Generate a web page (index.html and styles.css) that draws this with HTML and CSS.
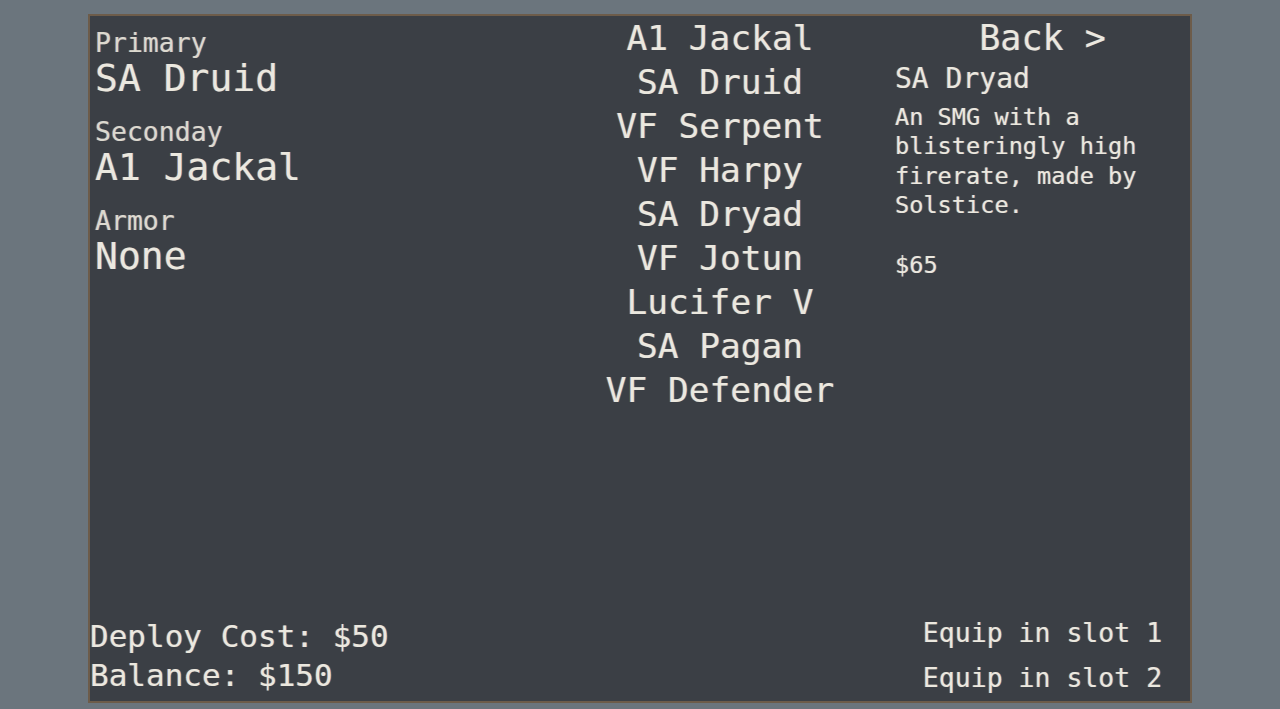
FILE: index.html
```html
<!DOCTYPE html>
<html lang="en">
<head>
<meta charset="utf-8">
<title>Loadout</title>
<link rel="stylesheet" href="styles.css">
</head>
<body>
<main class="panel">
  <section class="col col-loadout">
    <div class="loadout">
      <div class="slot">
        <div class="slot-label">Primary</div>
        <div class="slot-value">SA Druid</div>
      </div>
      <div class="slot">
        <div class="slot-label">Seconday</div>
        <div class="slot-value">A1 Jackal</div>
      </div>
      <div class="slot">
        <div class="slot-label">Armor</div>
        <div class="slot-value">None</div>
      </div>
    </div>
    <div class="funds">
      <div>Deploy Cost: $50</div>
      <div>Balance: $150</div>
    </div>
  </section>

  <section class="col col-list">
    <ul class="weapons">
      <li>A1 Jackal</li>
      <li>SA Druid</li>
      <li>VF Serpent</li>
      <li>VF Harpy</li>
      <li>SA Dryad</li>
      <li>VF Jotun</li>
      <li>Lucifer V</li>
      <li>SA Pagan</li>
      <li>VF Defender</li>
    </ul>
  </section>

  <section class="col col-detail">
    <div class="detail">
      <div class="back">Back &gt;</div>
      <div class="detail-name">SA Dryad</div>
      <p class="detail-desc">An SMG with a blisteringly high firerate, made by Solstice.</p>
      <p class="detail-price">$65</p>
    </div>
    <div class="equip">
      <div class="equip-btn">Equip in slot 1</div>
      <div class="equip-btn">Equip in slot 2</div>
    </div>
  </section>
</main>
</body>
</html>
```
FILE: styles.css
```css
html, body {
  margin: 0;
  padding: 0;
}

body {
  width: 1280px;
  height: 709px;
  background: #6b757d;
  font-family: "DejaVu Sans Mono", "Liberation Mono", monospace;
  color: #ebe8df;
  overflow: hidden;
}

.panel {
  box-sizing: border-box;
  margin: 14px 0 0 88px;
  width: 1104px;
  height: 689px;
  border: 2px solid #6d5c4a;
  background: #3b3f45;
  display: grid;
  grid-template-columns: 490px 280px 1fr;
  text-shadow: -1px 0 rgba(230, 150, 60, 0.35), 1px 0 rgba(80, 150, 255, 0.35);
}

.col {
  display: flex;
  flex-direction: column;
  justify-content: space-between;
  min-height: 0;
}

/* left: current loadout + money */
.loadout {
  padding: 12px 0 0 5px;
}

.slot {
  margin-bottom: 19px;
}

.slot-label {
  font-size: 26.5px;
  line-height: 30px;
  color: #dcd9cf;
}

.slot-value {
  font-size: 38px;
  line-height: 40px;
}

.funds {
  font-size: 31px;
  line-height: 39px;
  padding-bottom: 6px;
}

/* middle: weapon list */
.weapons {
  list-style: none;
  margin: 0;
  padding: 0;
  text-align: center;
  font-size: 34.5px;
  line-height: 44px;
}

/* right: weapon details + equip buttons */
.col-detail {
  padding: 0 0 0 35px;
}

.back {
  text-align: center;
  font-size: 35px;
  line-height: 44px;
}

.detail-name {
  font-size: 28px;
  line-height: 36px;
  margin-top: 1px;
}

.detail-desc,
.detail-price {
  margin: 0;
  font-size: 23.6px;
  line-height: 29.3px;
}

.detail-desc {
  margin-top: 6px;
  padding-right: 20px;
}

.detail-price {
  margin-top: 31px;
}

.equip {
  display: flex;
  flex-direction: column;
  align-items: center;
  padding-bottom: 1px;
}

.equip-btn {
  font-size: 26.5px;
  line-height: 45px;
}
```
